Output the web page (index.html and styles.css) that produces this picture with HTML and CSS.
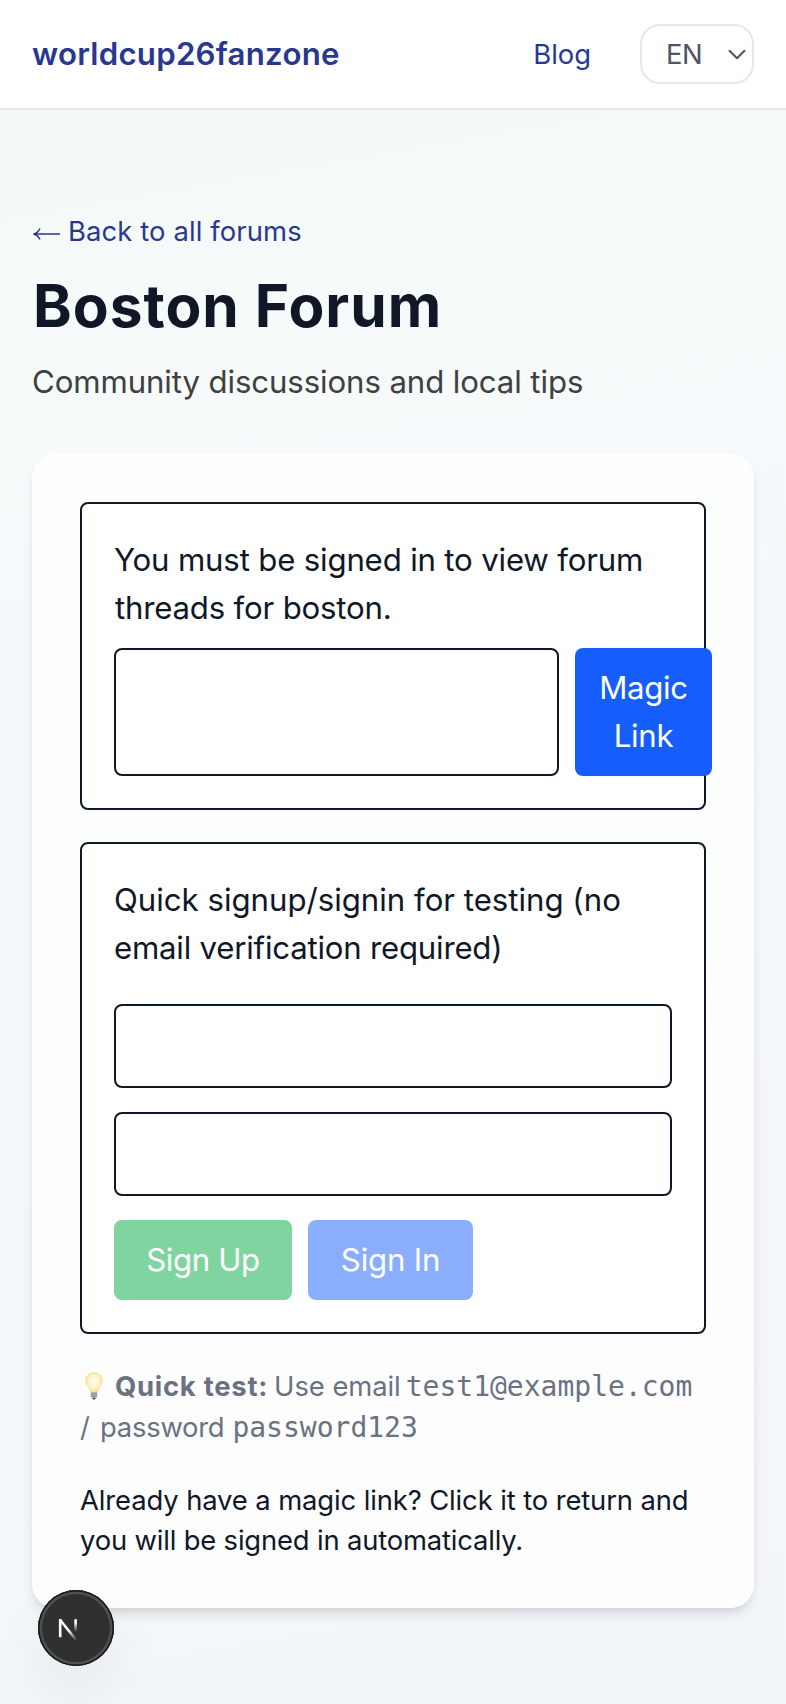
FILE: index.html
```html
<!DOCTYPE html>
<html lang="en">
<head>
<meta charset="utf-8">
<title>Boston Forum</title>
<link rel="stylesheet" href="styles.css">
</head>
<body>
<header class="header">
  <a class="logo">worldcup26fanzone</a>
  <nav class="nav">
    <a class="nav-link">Blog</a>
    <div class="lang"><span>EN</span>
      <svg class="chevron" width="18" height="12" viewBox="0 0 18 12" fill="none"><path d="M1.5 1.8 9 9.3l7.500-7.500" stroke="#4a5565" stroke-width="2" stroke-linecap="round" stroke-linejoin="round"/></svg>
    </div>
  </nav>
</header>
<main class="main">
  <a class="back"><svg width="29" height="14" viewBox="0 0 29 14" fill="none" stroke="#283891" stroke-width="1.500"><path d="M28 7H2M8 1.500C6.500 4.500 4.500 6.300 1.500 7 4.500 7.700 6.500 9.500 8 12.500"/></svg><span>Back to all forums</span></a>
  <h1 class="title">Boston Forum</h1>
  <p class="subtitle">Community discussions and local tips</p>
  <section class="card">
    <div class="panel">
      <p class="text"><span class="l1">You must be signed in to view forum</span><br><span class="l2">threads for boston.</span></p>
      <div class="magic-row">
        <input class="field magic-field" type="email" aria-label="Email">
        <button class="btn magic-btn">Magic<br>Link</button>
      </div>
    </div>
    <div class="panel">
      <p class="text"><span class="l3">Quick signup/signin for testing (no</span><br><span class="l4">email verification required)</span></p>
      <form class="form">
        <input class="field" type="email" aria-label="Email">
        <input class="field" type="password" aria-label="Password">
        <div class="actions">
          <button class="btn signup" type="button">Sign Up</button>
          <button class="btn signin" type="button">Sign In</button>
        </div>
      </form>
    </div>
    <p class="hint"><svg class="bulb" width="18" height="28" viewBox="0 0 18 28">
        <defs>
          <radialGradient id="glow" cx=".5" cy=".45" r=".55"><stop offset="0" stop-color="#fffef5"/><stop offset=".55" stop-color="#fff6d4"/><stop offset="1" stop-color="#fbdc86"/></radialGradient>
        </defs>
        <path d="M9 .6C4.200.6.8 4.200.8 8.600c0 3.600 2.300 5.400 3.500 7.900.7 1.500.8 3.300 1.500 3.800h6.400c.7-.5.8-2.300 1.500-3.800 1.200-2.500 3.500-4.300 3.500-7.900C17.200 4.200 13.800.6 9 .6Z" fill="url(#glow)" stroke="#f9dc91" stroke-width=".8"/>
        <path d="M5.800 20h6.400v4.500l-1.500 1.800H7.300l-1.500-1.800Z" fill="#b5b2aa"/>
        <path d="M5.800 22.200h6.400M6 24.400h6" stroke="#817e78" stroke-width=".8"/>
        <path d="M7.200 26h3.600l-.8 1.600H8Z" fill="#49484b"/>
      </svg><strong>Quick test:</strong><span class="use">Use email</span><code>test1@example.com</code><br><span class="slash">/ password</span><code class="pw">password123</code></p>
    <p class="note"><span class="n1">Already have a magic link? Click it to return and</span><br><span class="n2">you will be signed in automatically.</span></p>
  </section>
</main>
<div class="dev-badge">
  <svg width="24" height="24" viewBox="0 0 24 24" fill="none">
    <defs>
      <linearGradient id="stem" x1="0" y1="3" x2="0" y2="16" gradientUnits="userSpaceOnUse"><stop offset=".3" stop-color="#fff"/><stop offset="1" stop-color="#fff" stop-opacity="0"/></linearGradient>
      <linearGradient id="diag" x1="12" y1="14" x2="20" y2="24" gradientUnits="userSpaceOnUse"><stop stop-color="#fff"/><stop offset="1" stop-color="#fff" stop-opacity="0"/></linearGradient>
    </defs>
    <path d="M3.200 21.200V3" stroke="#fff" stroke-width="2.600"/>
    <path d="M2.800 3.500 19.400 24.300" stroke="url(#diag)" stroke-width="2.600"/>
    <path d="M18.600 3.200V15.500" stroke="url(#stem)" stroke-width="2.600"/>
  </svg>
</div>
</body>
</html>
```

FILE: styles.css
```css
* { box-sizing: border-box; }
body {
  margin: 0;
  height: 1704px;
  overflow: hidden;
  font-family: Inter, "Liberation Sans", sans-serif;
  color: #101828;
  background: #f3f6fa;
}
p, h1 { margin: 0; }

.header {
  display: flex;
  align-items: center;
  justify-content: space-between;
  height: 110px;
  padding: 0 32px;
  background: #fff;
  border-bottom: 2px solid #e5e7eb;
}
.logo { font-size: 31.2px; font-weight: 600; letter-spacing: .25px; color: #283891; }
.nav { display: flex; align-items: center; gap: 49px; }
.nav-link { font-size: 27.4px; color: #283891; }
.lang {
  display: flex;
  align-items: center;
  justify-content: space-between;
  width: 114px;
  height: 60px;
  padding: 0 6px 0 24px;
  border: 2px solid #e5e7eb;
  border-radius: 20px;
  font-size: 27.4px;
  letter-spacing: -.4px;
  color: #4a5565;
}
.chevron { margin-top: 2px; }

.main {
  height: 1594px;
  padding: 101px 32px 0;
  background: linear-gradient(170deg, #f5faf8 0%, #f6fafb 20%, #f4f8fa 45%, #f2f6fa 100%);
}
.back {
  display: flex;
  align-items: center;
  gap: 7px;
  height: 40px;
  font-size: 27.4px;
  line-height: 40px;
  letter-spacing: .12px;
  color: #283891;
}
.back svg { margin-top: 5px; }
.title { margin: 25px 0 0 1px; font-size: 58.6px; line-height: 60px; font-weight: 700; letter-spacing: 1px; }
.subtitle { margin-top: 22px; font-size: 31.2px; line-height: 48px; letter-spacing: -.11px; color: #404040; }

.card {
  display: flex;
  flex-direction: column;
  gap: 32px;
  height: 1154px;
  margin-top: 48px;
  padding: 48px;
  border-radius: 24px;
  background: linear-gradient(#fdfefe, #fdfdfe);
  box-shadow: 0 8px 12px -2px rgba(0, 0, 0, .1), 0 4px 8px -4px rgba(0, 0, 0, .1);
}
.panel { width: 626px; padding: 32px; border: 2px solid #101828; border-radius: 8px; background: #fff; }
.text { font-size: 31.2px; line-height: 48px; }
.l1 { letter-spacing: -.18px; }
.l2 { letter-spacing: -.2px; margin-left: 1px; }
.l3 { letter-spacing: -.01px; }
.l4 { letter-spacing: -.22px; }
.field { display: block; width: 100%; height: 84px; padding: 16px; border: 2px solid #101828; border-radius: 8px; background: #fff; }
.magic-row { display: flex; gap: 16px; width: 598px; margin-top: 16px; }
.magic-row .magic-field { width: 445px; height: 128px; }
.btn {
  height: 80px;
  padding: 0;
  border: 0;
  border-radius: 8px;
  color: #fff;
  font-family: inherit;
  font-size: 31.2px;
  line-height: 48px;
  letter-spacing: -.35px;
}
.magic-row .magic-btn { width: 137px; height: 128px; background: #155dfc; }
.panel:first-child { height: 308px; }
.form { display: flex; flex-direction: column; gap: 24px; margin-top: 32px; }
.actions { display: flex; gap: 16px; }
.signup { width: 178px; background: #80d4a0; }
.signin { width: 165px; background: #8aaefd; letter-spacing: -.2px; }

.hint { font-size: 27.4px; line-height: 41px; color: #6a7282; white-space: nowrap; height: 82px; }
.bulb { margin: 0 12px 0 5px; vertical-align: -4px; }
.hint strong { font-weight: 700; letter-spacing: .75px; }
.use { margin-left: 6px; letter-spacing: -.06px; }
.hint code { margin-left: 5px; font-family: "DejaVu Sans Mono", monospace; font-size: 28px; line-height: 0; }
.slash { letter-spacing: -.25px; word-spacing: 3px; }
.hint .pw { margin-left: 8px; }
.note { font-size: 27.4px; line-height: 40px; white-space: nowrap; }
.n1 { letter-spacing: -.11px; }
.n2 { letter-spacing: -.17px; }

/* Floating developer indicator over the page */
.dev-badge {
  position: absolute;
  left: 38px;
  top: 1590px;
  display: flex;
  align-items: center;
  width: 76px;
  height: 76px;
  padding-left: 19px;
  border-radius: 50%;
  background: #2f3030;
  box-shadow: inset 0 0 0 1.500px #171717, inset 0 0 0 4px #505050, 0 32px 64px -8px rgba(0, 0, 0, .09);
}
```
